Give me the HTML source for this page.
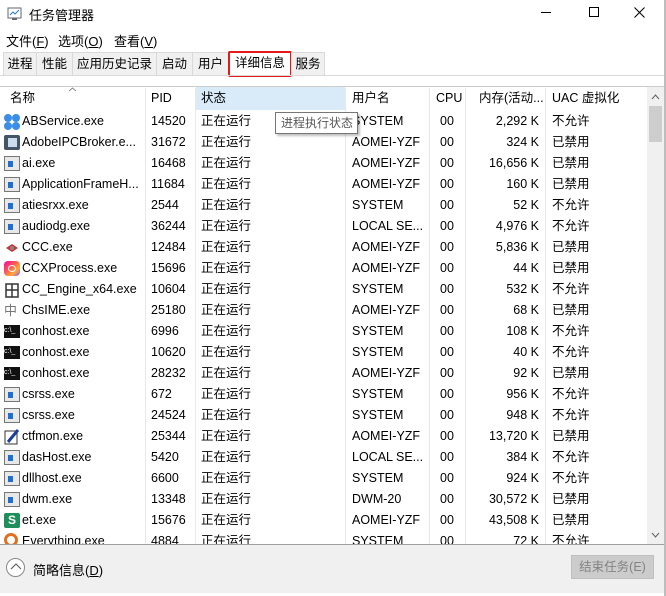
<!DOCTYPE html>
<html><head><meta charset="utf-8"><style>
*{margin:0;padding:0;box-sizing:border-box}
body{width:666px;height:596px;background:#fff;font-family:"Liberation Sans","Noto Sans CJK SC",sans-serif;font-size:12.5px;color:#000;position:relative;overflow:hidden}
.a{position:absolute;white-space:nowrap}
.h{position:absolute;white-space:nowrap;top:87px;height:23px;line-height:23px}
.tab{position:absolute;top:52px;height:24px;line-height:23px;background:#f0f0f0;border:1px solid #d9d9d9;border-bottom:none;text-align:center}
.row{position:absolute;left:0;width:647px;height:21px;line-height:21px}
.row span{position:absolute;top:0}
.ic{position:absolute;left:4px;top:3px;width:16px;height:15px}
.win{border:1px solid #777;background:#e8e8e8}
.win:after{content:"";position:absolute;left:3px;top:4px;width:5px;height:6px;background:#1f6fd0}
.vl{position:absolute;top:88px;height:456px;width:1px;background:#e8e8e8}
</style></head><body>
<svg class="a" style="left:7px;top:6px" width="16" height="16"><rect x="1" y="2" width="13" height="10" fill="#fff" stroke="#667"/><polyline points="3,9 6,6 8,8 12,4" fill="none" stroke="#2a7ad0"/><rect x="5" y="12" width="5" height="2" fill="#667"/></svg>
<div class="a" style="left:29px;top:5px;font-size:13px">任务管理器</div>
<div class="a" style="left:541px;top:12px;width:10px;height:1px;background:#000"></div>
<div class="a" style="left:589px;top:7px;width:10px;height:10px;border:1px solid #000"></div>
<svg class="a" style="left:634px;top:7px" width="11" height="11"><path d="M0.5 0.5L10.5 10.5M10.5 0.5L0.5 10.5" stroke="#000"/></svg>
<div class="a" style="left:6px;top:31px;font-size:13px">文件(<u>F</u>)</div>
<div class="a" style="left:58px;top:31px;font-size:13px">选项(<u>O</u>)</div>
<div class="a" style="left:114px;top:31px;font-size:13px">查看(<u>V</u>)</div>
<div class="tab" style="left:3px;width:34px">进程</div>
<div class="tab" style="left:36px;width:37px">性能</div>
<div class="tab" style="left:72px;width:85px">应用历史记录</div>
<div class="tab" style="left:156px;width:37px">启动</div>
<div class="tab" style="left:192px;width:37px">用户</div>
<div class="tab" style="left:228px;width:64px;background:#fff;top:51px;height:26px;border:2px solid #e81818;border-radius:2px;line-height:21px">详细信息</div>
<div class="tab" style="left:291px;width:34px">服务</div>
<div class="a" style="left:0;top:75px;width:664px;height:1px;background:#d9d9d9"></div>
<div class="a" style="left:0;top:86px;width:664px;height:1px;background:#ccc"></div>
<div class="a" style="left:196px;top:87px;width:149px;height:23px;background:#d9ebf9"></div>
<svg class="a" style="left:68px;top:87px" width="9" height="5"><polyline points="1,4 4.5,1 8,4" fill="none" stroke="#888"/></svg>
<div class="h" style="left:10px">名称</div>
<div class="h" style="left:151px">PID</div>
<div class="h" style="left:201px">状态</div>
<div class="h" style="left:352px">用户名</div>
<div class="h" style="left:436px">CPU</div>
<div class="h" style="left:479px">内存(活动...</div>
<div class="h" style="left:552px">UAC 虚拟化</div>
<div class="vl" style="left:145px"></div><div class="vl" style="left:195px"></div><div class="vl" style="left:345px"></div><div class="vl" style="left:429px"></div><div class="vl" style="left:465px"></div><div class="vl" style="left:545px"></div>
<div class="row" style="top:111px"><div class="ic"><svg width="16" height="16"><circle cx="4" cy="4" r="4" fill="#3b8ee8"/><circle cx="12" cy="4" r="4" fill="#3b8ee8"/><circle cx="4" cy="12" r="4" fill="#3b8ee8"/><circle cx="12" cy="12" r="4" fill="#3b8ee8"/></svg></div><span style="left:22px">ABService.exe</span><span style="left:151px">14520</span><span style="left:201px">正在运行</span><span style="left:352px">SYSTEM</span><span style="left:440px">00</span><span style="right:108px">2,292 K</span><span style="left:552px">不允许</span></div>
<div class="row" style="top:132px"><div class="ic" style="background:#456;border-radius:2px"><div style="position:absolute;left:4px;top:3px;width:9px;height:9px;background:#cde"></div></div><span style="left:22px">AdobeIPCBroker.e...</span><span style="left:151px">31672</span><span style="left:201px">正在运行</span><span style="left:352px">AOMEI-YZF</span><span style="left:440px">00</span><span style="right:108px">324 K</span><span style="left:552px">已禁用</span></div>
<div class="row" style="top:153px"><div class="ic win"></div><span style="left:22px">ai.exe</span><span style="left:151px">16468</span><span style="left:201px">正在运行</span><span style="left:352px">AOMEI-YZF</span><span style="left:440px">00</span><span style="right:108px">16,656 K</span><span style="left:552px">已禁用</span></div>
<div class="row" style="top:174px"><div class="ic win"></div><span style="left:22px">ApplicationFrameH...</span><span style="left:151px">11684</span><span style="left:201px">正在运行</span><span style="left:352px">AOMEI-YZF</span><span style="left:440px">00</span><span style="right:108px">160 K</span><span style="left:552px">已禁用</span></div>
<div class="row" style="top:195px"><div class="ic win"></div><span style="left:22px">atiesrxx.exe</span><span style="left:151px">2544</span><span style="left:201px">正在运行</span><span style="left:352px">SYSTEM</span><span style="left:440px">00</span><span style="right:108px">52 K</span><span style="left:552px">不允许</span></div>
<div class="row" style="top:216px"><div class="ic win"></div><span style="left:22px">audiodg.exe</span><span style="left:151px">36244</span><span style="left:201px">正在运行</span><span style="left:352px">LOCAL SE...</span><span style="left:440px">00</span><span style="right:108px">4,976 K</span><span style="left:552px">不允许</span></div>
<div class="row" style="top:237px"><div class="ic"><svg width="16" height="16"><path d="M2 8 L8 4 L14 8 L8 12Z" fill="#c33"/><circle cx="8" cy="8" r="2" fill="#888"/></svg></div><span style="left:22px">CCC.exe</span><span style="left:151px">12484</span><span style="left:201px">正在运行</span><span style="left:352px">AOMEI-YZF</span><span style="left:440px">00</span><span style="right:108px">5,836 K</span><span style="left:552px">已禁用</span></div>
<div class="row" style="top:258px"><div class="ic" style="border-radius:4px;background:linear-gradient(135deg,#f0a 0%,#f55 40%,#fa3 70%,#85f 100%)"><div style="position:absolute;left:4px;top:4px;width:8px;height:7px;border:1.5px solid #fff;border-radius:50%"></div></div><span style="left:22px">CCXProcess.exe</span><span style="left:151px">15696</span><span style="left:201px">正在运行</span><span style="left:352px">AOMEI-YZF</span><span style="left:440px">00</span><span style="right:108px">44 K</span><span style="left:552px">已禁用</span></div>
<div class="row" style="top:279px"><div class="ic"><svg width="16" height="16"><rect x="2" y="2" width="12" height="13" fill="#fff" stroke="#333" stroke-width="1.5"/><path d="M8 2V15M2 8H14" stroke="#333" stroke-width="1.5"/></svg></div><span style="left:22px">CC_Engine_x64.exe</span><span style="left:151px">10604</span><span style="left:201px">正在运行</span><span style="left:352px">SYSTEM</span><span style="left:440px">00</span><span style="right:108px">532 K</span><span style="left:552px">不允许</span></div>
<div class="row" style="top:300px"><div class="ic" style="color:#777;font-size:13px;line-height:15px">中</div><span style="left:22px">ChsIME.exe</span><span style="left:151px">25180</span><span style="left:201px">正在运行</span><span style="left:352px">AOMEI-YZF</span><span style="left:440px">00</span><span style="right:108px">68 K</span><span style="left:552px">已禁用</span></div>
<div class="row" style="top:321px"><div class="ic" style="background:#111;height:13px;top:4px;color:#fff;font-size:7px;line-height:12px">c:\_</div><span style="left:22px">conhost.exe</span><span style="left:151px">6996</span><span style="left:201px">正在运行</span><span style="left:352px">SYSTEM</span><span style="left:440px">00</span><span style="right:108px">108 K</span><span style="left:552px">不允许</span></div>
<div class="row" style="top:342px"><div class="ic" style="background:#111;height:13px;top:4px;color:#fff;font-size:7px;line-height:12px">c:\_</div><span style="left:22px">conhost.exe</span><span style="left:151px">10620</span><span style="left:201px">正在运行</span><span style="left:352px">SYSTEM</span><span style="left:440px">00</span><span style="right:108px">40 K</span><span style="left:552px">不允许</span></div>
<div class="row" style="top:363px"><div class="ic" style="background:#111;height:13px;top:4px;color:#fff;font-size:7px;line-height:12px">c:\_</div><span style="left:22px">conhost.exe</span><span style="left:151px">28232</span><span style="left:201px">正在运行</span><span style="left:352px">AOMEI-YZF</span><span style="left:440px">00</span><span style="right:108px">92 K</span><span style="left:552px">已禁用</span></div>
<div class="row" style="top:384px"><div class="ic win"></div><span style="left:22px">csrss.exe</span><span style="left:151px">672</span><span style="left:201px">正在运行</span><span style="left:352px">SYSTEM</span><span style="left:440px">00</span><span style="right:108px">956 K</span><span style="left:552px">不允许</span></div>
<div class="row" style="top:405px"><div class="ic win"></div><span style="left:22px">csrss.exe</span><span style="left:151px">24524</span><span style="left:201px">正在运行</span><span style="left:352px">SYSTEM</span><span style="left:440px">00</span><span style="right:108px">948 K</span><span style="left:552px">不允许</span></div>
<div class="row" style="top:426px"><div class="ic"><svg width="16" height="16"><rect x="1" y="2" width="12" height="13" fill="#fff" stroke="#333"/><path d="M4 13 L14 1" stroke="#1a3fa0" stroke-width="3"/></svg></div><span style="left:22px">ctfmon.exe</span><span style="left:151px">25344</span><span style="left:201px">正在运行</span><span style="left:352px">AOMEI-YZF</span><span style="left:440px">00</span><span style="right:108px">13,720 K</span><span style="left:552px">已禁用</span></div>
<div class="row" style="top:447px"><div class="ic win"></div><span style="left:22px">dasHost.exe</span><span style="left:151px">5420</span><span style="left:201px">正在运行</span><span style="left:352px">LOCAL SE...</span><span style="left:440px">00</span><span style="right:108px">384 K</span><span style="left:552px">不允许</span></div>
<div class="row" style="top:468px"><div class="ic win"></div><span style="left:22px">dllhost.exe</span><span style="left:151px">6600</span><span style="left:201px">正在运行</span><span style="left:352px">SYSTEM</span><span style="left:440px">00</span><span style="right:108px">924 K</span><span style="left:552px">不允许</span></div>
<div class="row" style="top:489px"><div class="ic win"></div><span style="left:22px">dwm.exe</span><span style="left:151px">13348</span><span style="left:201px">正在运行</span><span style="left:352px">DWM-20</span><span style="left:440px">00</span><span style="right:108px">30,572 K</span><span style="left:552px">已禁用</span></div>
<div class="row" style="top:510px"><div class="ic" style="background:#1d8f5a;border-radius:2px;color:#fff;font-weight:bold;font-size:12px;line-height:15px;text-align:center">S</div><span style="left:22px">et.exe</span><span style="left:151px">15676</span><span style="left:201px">正在运行</span><span style="left:352px">AOMEI-YZF</span><span style="left:440px">00</span><span style="right:108px">43,508 K</span><span style="left:552px">已禁用</span></div>
<div class="row" style="top:531px;height:13px;overflow:hidden"><div class="ic" style="border:3px solid #e07020;border-radius:50%;width:14px;height:14px;top:2px"></div><span style="left:22px">Everything.exe</span><span style="left:151px">4884</span><span style="left:201px">正在运行</span><span style="left:352px">SYSTEM</span><span style="left:440px">00</span><span style="right:108px">72 K</span><span style="left:552px">不允许</span></div>
<div class="a" style="left:275px;top:112px;width:83px;height:22px;background:#fff;border:1px solid #767676;box-shadow:2px 2px 2px rgba(0,0,0,.25);line-height:20px;padding-left:5px;color:#575757;font-size:12px">进程执行状态</div>
<div class="a" style="left:647px;top:87px;width:17px;height:457px;background:#f0f0f0"></div>
<div class="a" style="left:649px;top:106px;width:13px;height:36px;background:#cdcdcd"></div>
<svg class="a" style="left:651px;top:94px" width="9" height="6"><polyline points="1,5 4.5,1 8,5" fill="none" stroke="#606060"/></svg>
<svg class="a" style="left:651px;top:532px" width="9" height="6"><polyline points="1,1 4.5,5 8,1" fill="none" stroke="#606060"/></svg>
<div class="a" style="left:0;top:544px;width:664px;height:1px;background:#a0a0a0"></div>
<div class="a" style="left:0;top:545px;width:664px;height:48px;background:#f0f0f0"></div>
<div class="a" style="left:6px;top:558px;width:19px;height:19px;border:1px solid #888;border-radius:50%;background:#fff"></div>
<svg class="a" style="left:9px;top:562px" width="14" height="10"><polyline points="2,7 7,2 12,7" fill="none" stroke="#555"/></svg>
<div class="a" style="left:33px;top:560px;font-size:13px">简略信息(<u>D</u>)</div>
<div class="a" style="left:571px;top:555px;width:83px;height:24px;background:#ccc;border:1px solid #bfbfbf;color:#838383;text-align:center;line-height:22px;font-size:12.5px">结束任务(E)</div>
<div class="a" style="left:0;top:593px;width:666px;height:3px;background:#fff"></div>
<div class="a" style="left:664px;top:0;width:2px;height:596px;background:#bdbdbd"></div>
</body></html>
